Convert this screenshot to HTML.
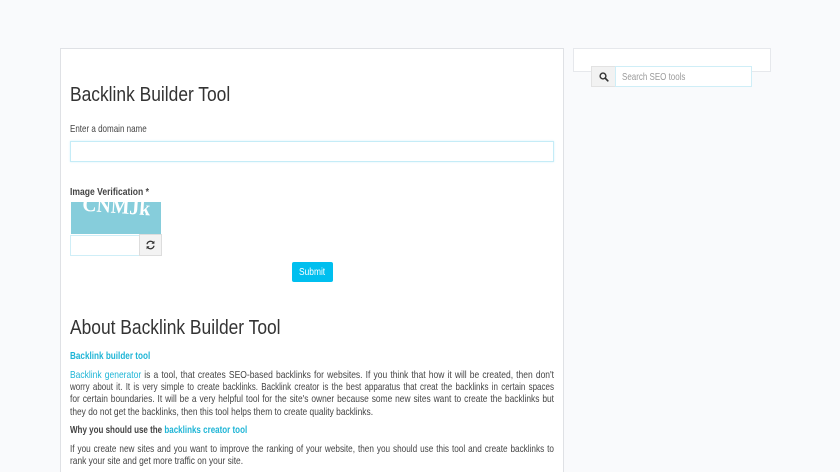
<!DOCTYPE html>
<html><head><meta charset="utf-8">
<style>
html,body{margin:0;padding:0;width:840px;height:472px;overflow:hidden;background:#f9fafc;font-family:"Liberation Sans",sans-serif;}
#w{position:absolute;left:0;top:0;width:840px;height:472px;overflow:hidden;background:#f9fafc;}
.a{position:absolute;box-sizing:border-box;white-space:nowrap;}
.t{position:absolute;left:70px;font-size:10.5px;line-height:14px;height:14px;color:#444;white-space:nowrap;transform-origin:0 50%;}
.j{text-align:justify;text-align-last:justify;white-space:normal;}
a{color:#1fb5d6;text-decoration:none;}
h1{position:absolute;margin:0;left:70px;font-weight:400;color:#333;font-size:20px;line-height:26px;white-space:nowrap;transform:scaleX(.87);transform-origin:0 50%;}
</style></head><body><div id="w">
<div class="a" style="left:60px;top:48px;width:504px;height:440px;background:#fff;border:1px solid #dfe1e5;"></div>
<div class="a" style="left:573px;top:48px;width:198px;height:24px;background:#fff;border:1px solid #e6e8ec;"></div>

<div class="a" style="left:591px;top:66px;width:25px;height:21px;background:#f2f2f2;border:1px solid #e2e2e2;"></div>
<svg class="a" style="left:599px;top:72px" width="10" height="10" viewBox="0 0 10 10"><circle cx="4" cy="4" r="2.9" fill="none" stroke="#333" stroke-width="1.4"/><path d="M6.2 6.2l2.6 2.6" stroke="#333" stroke-width="1.7" stroke-linecap="round"/></svg>
<div class="a" style="left:615px;top:66px;width:137px;height:21px;background:#fff;border:1px solid #cfeef7;"></div>
<div class="a" style="left:622px;top:70px;font-size:10.5px;line-height:14px;color:#9a9a9a;transform:scaleX(.76);transform-origin:0 50%;">Search SEO tools</div>

<h1 style="top:82px;">Backlink Builder Tool</h1>
<div class="t" style="top:122px;transform:scaleX(.764);">Enter a domain name</div>
<div class="a" style="left:70px;top:141px;width:484px;height:21px;background:#fff;border:1px solid #c5ecf7;box-shadow:0 0 2px #d5f2fa;"></div>

<div class="t" style="top:185px;font-weight:700;transform:scaleX(.815);">Image Verification *</div>
<svg class="a" style="left:71px;top:202px" width="90" height="32" viewBox="0 0 90 32"><rect width="90" height="32" fill="#86cddb"/><text x="11" y="11" font-family="Liberation Serif,serif" font-weight="700" font-size="21" fill="#fff" textLength="68" lengthAdjust="spacingAndGlyphs" transform="rotate(4 45 10)">CNMJk</text></svg>
<div class="a" style="left:70px;top:235px;width:70px;height:21px;background:#fff;border:1px solid #cfeef7;"></div>
<div class="a" style="left:139px;top:234px;width:23px;height:22px;background:#f3f3f3;border:1px solid #ddd;"></div>
<svg class="a" style="left:146px;top:240px" width="9" height="10" viewBox="0 0 9 10"><path d="M1 4.2A3.6 3.6 0 0 1 7.3 2.6M8 5.8A3.6 3.6 0 0 1 1.7 7.4" fill="none" stroke="#333" stroke-width="1.3"/><path d="M8.4.8v3H5.4zM.6 9.2v-3h3z" fill="#333"/></svg>
<div class="a" style="left:292px;top:262px;width:41px;height:20px;background:#00bfef;border-radius:2px;"></div>
<div class="a" style="left:299px;top:265px;font-size:10.5px;line-height:14px;color:#fff;transform:scaleX(.8);transform-origin:0 50%;">Submit</div>

<h1 style="top:315px;">About Backlink Builder Tool</h1>
<div class="t" style="top:349px;font-weight:700;transform:scaleX(.777);"><a href="#">Backlink builder tool</a></div>
<div class="t j" style="top:368px;width:598px;transform:scaleX(.8094);"><a href="#">Backlink generator</a> is a tool, that creates SEO-based backlinks for websites. If you think that how it will be created, then don't</div>
<div class="t j" style="top:380px;width:634px;transform:scaleX(.7634);">worry about it. It is very simple to create backlinks. Backlink creator is the best apparatus that creat the backlinks in certain spaces</div>
<div class="t j" style="top:392px;width:606px;transform:scaleX(.7987);">for certain boundaries. It will be a very helpful tool for the site's owner because some new sites want to create the backlinks but</div>
<div class="t" style="top:405px;transform:scaleX(.8);">they do not get the backlinks, then this tool helps them to create quality backlinks.</div>
<div class="t" style="top:423px;font-weight:700;transform:scaleX(.763);">Why you should use the <a href="#">backlinks creator tool</a></div>
<div class="t j" style="top:442px;width:620px;transform:scaleX(.7806);">If you create new sites and you want to improve the ranking of your website, then you should use this tool and create backlinks to</div>
<div class="t" style="top:454px;transform:scaleX(.8);">rank your site and get more traffic on your site.</div>
</div></body></html>
